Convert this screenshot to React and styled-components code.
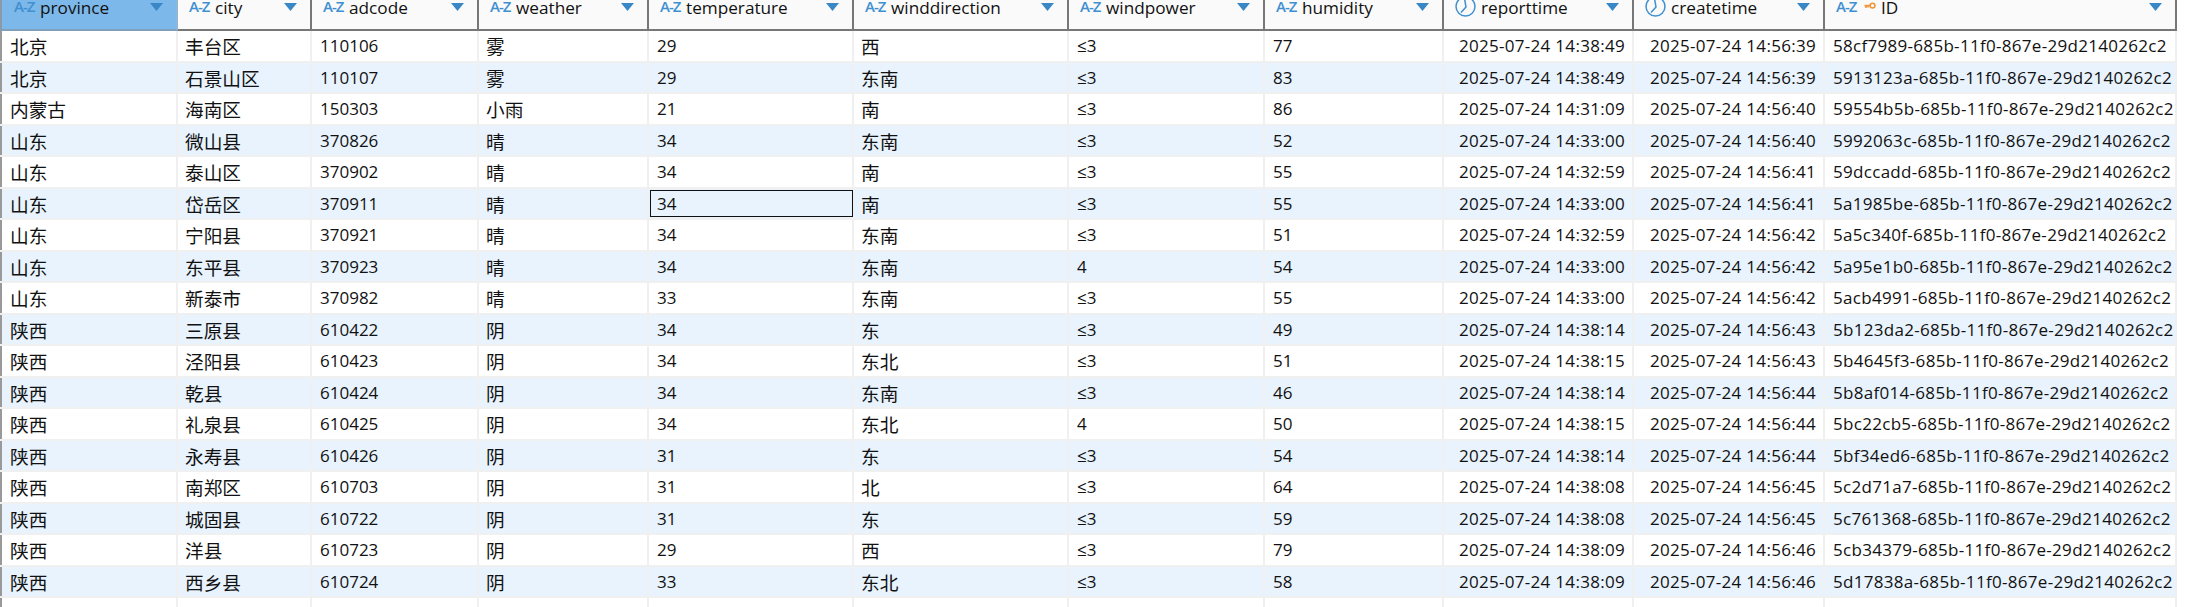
import React from "react";
import styled, { createGlobalStyle } from "styled-components";

const COLS = "178px 134px 167px 170px 205px 215px 196px 179px 190px 191px 352px";
const LATIN = '"Open Sans", "Noto Sans CJK SC", sans-serif';
const CJK = '"Noto Sans CJK SC", "Open Sans", sans-serif';

const Global = createGlobalStyle`
  html, body { margin: 0; padding: 0; background: #fff; overflow: hidden; }
  #root { width: 2187px; height: 607px; overflow: hidden; }
`;

const Grid = styled.div`
  width: 2177px;
  font-family: ${LATIN};
  color: #111;
`;

const HeadRow = styled.div`
  display: grid;
  grid-template-columns: ${COLS};
  height: 31px;
  overflow: hidden;
`;

const Head = styled.div`
  display: flex;
  align-items: flex-start;
  box-sizing: border-box;
  height: 31px;
  padding-left: ${(p) => (p.$active ? "12px" : "11px")};
  overflow: hidden;
  background: ${(p) => (p.$active ? "#7db8ea" : "#fafafa")};
  border-bottom: 2px solid ${(p) => (p.$active ? "#7f9fba" : "#777")};
  border-right: 2px solid ${(p) => (p.$active ? "#8fb6d6" : "#777")};
  border-left: ${(p) => (p.$active ? "2px solid #8a9aa8" : "0")};
`;

const AzIcon = styled.span`
  flex: none;
  width: 20px;
  font-size: 15px;
  line-height: 12px;
  font-weight: 600;
  letter-spacing: -1px;
  white-space: nowrap;
  color: #3f90d0;
`;

const HeadLabel = styled.span`
  margin-left: ${(p) => p.$gap}px;
  font-size: 17.2px;
  line-height: 15px;
  white-space: nowrap;
  padding-bottom: 5px;
`;

const Caret = styled.svg`
  flex: none;
  width: 13px;
  height: 8px;
  margin: 3px 13px 0 auto;
  fill: #3a87c6;
`;

const ClockSvg = styled.svg`
  flex: none;
  width: 21px;
  height: 21px;
  margin-top: -4px;
  fill: none;
  stroke: #3f90d0;
  stroke-width: 1.5;
`;

const KeySvg = styled.svg`
  flex: none;
  width: 12px;
  height: 8px;
  margin: 2px 0 0 8px;
  fill: none;
  stroke: #f0973a;
  stroke-width: 1.6;
`;

const Row = styled.div`
  display: grid;
  grid-template-columns: ${COLS};
  height: 31.5px;
  box-sizing: border-box;
  background: ${(p) => (p.$alt ? "#e8f3fd" : "#fff")};
  border-bottom: 2px solid #f0f0f0;
  box-shadow: inset 2px 0 0 #999;
`;

const Cell = styled.div`
  display: flex;
  align-items: center;
  justify-content: ${(p) => (p.$right ? "flex-end" : "flex-start")};
  box-sizing: border-box;
  min-width: 0;
  padding: 0 ${(p) => (p.$right ? "7px" : "0")} 0 ${(p) => (p.$right ? "0" : p.$cjk ? "7px" : "8px")};
  border-right: 2px solid #f0f0f0;
  font-family: ${(p) => (p.$cjk ? CJK : LATIN)};
  font-size: ${(p) => (p.$cjk ? "18.7px" : "17px")};
  letter-spacing: ${(p) => (p.$wide ? "0.3px" : "0")};
  white-space: nowrap;
  overflow: hidden;
  &:first-child { padding-left: 10px; }
  ${(p) => p.$focus && "outline: 1.5px solid #111; outline-offset: -2px;"}
`;

const Caretdown = () => (
  <Caret viewBox="0 0 13 8"><path d="M0 0h13L6.5 8z" /></Caret>
);

const ClockIcon = () => (
  <ClockSvg viewBox="0 0 21 21">
    <circle cx="10.5" cy="10.5" r="9.5" />
    <path d="M9.5 2.5 L11 11 L6 16.5" />
  </ClockSvg>
);

const KeyIcon = () => (
  <KeySvg viewBox="0 0 12 8">
    <circle cx="8.5" cy="3.6" r="2.4" />
    <path d="M6 3.6H0.5M2 3.6V6M4 3.6V5.6" />
  </KeySvg>
);

const columns = [
  { name: "province", cjk: true, icon: "az" },
  { name: "city", cjk: true, icon: "az" },
  { name: "adcode", icon: "az" },
  { name: "weather", cjk: true, icon: "az" },
  { name: "temperature", icon: "az" },
  { name: "winddirection", cjk: true, icon: "az" },
  { name: "windpower", icon: "az" },
  { name: "humidity", icon: "az" },
  { name: "reporttime", right: true, wide: true, icon: "clock" },
  { name: "createtime", right: true, wide: true, icon: "clock" },
  { name: "ID", wide: true, icon: "key" },
];

const S = "-685b-11f0-867e-29d2140262c2";
const D = "2025-07-24 ";
const rows = [
  ["北京", "丰台区", "110106", "雾", "29", "西", "≤3", "77", "14:38:49", "14:56:39", "58cf7989"],
  ["北京", "石景山区", "110107", "雾", "29", "东南", "≤3", "83", "14:38:49", "14:56:39", "5913123a"],
  ["内蒙古", "海南区", "150303", "小雨", "21", "南", "≤3", "86", "14:31:09", "14:56:40", "59554b5b"],
  ["山东", "微山县", "370826", "晴", "34", "东南", "≤3", "52", "14:33:00", "14:56:40", "5992063c"],
  ["山东", "泰山区", "370902", "晴", "34", "南", "≤3", "55", "14:32:59", "14:56:41", "59dccadd"],
  ["山东", "岱岳区", "370911", "晴", "34", "南", "≤3", "55", "14:33:00", "14:56:41", "5a1985be"],
  ["山东", "宁阳县", "370921", "晴", "34", "东南", "≤3", "51", "14:32:59", "14:56:42", "5a5c340f"],
  ["山东", "东平县", "370923", "晴", "34", "东南", "4", "54", "14:33:00", "14:56:42", "5a95e1b0"],
  ["山东", "新泰市", "370982", "晴", "33", "东南", "≤3", "55", "14:33:00", "14:56:42", "5acb4991"],
  ["陕西", "三原县", "610422", "阴", "34", "东", "≤3", "49", "14:38:14", "14:56:43", "5b123da2"],
  ["陕西", "泾阳县", "610423", "阴", "34", "东北", "≤3", "51", "14:38:15", "14:56:43", "5b4645f3"],
  ["陕西", "乾县", "610424", "阴", "34", "东南", "≤3", "46", "14:38:14", "14:56:44", "5b8af014"],
  ["陕西", "礼泉县", "610425", "阴", "34", "东北", "4", "50", "14:38:15", "14:56:44", "5bc22cb5"],
  ["陕西", "永寿县", "610426", "阴", "31", "东", "≤3", "54", "14:38:14", "14:56:44", "5bf34ed6"],
  ["陕西", "南郑区", "610703", "阴", "31", "北", "≤3", "64", "14:38:08", "14:56:45", "5c2d71a7"],
  ["陕西", "城固县", "610722", "阴", "31", "东", "≤3", "59", "14:38:08", "14:56:45", "5c761368"],
  ["陕西", "洋县", "610723", "阴", "29", "西", "≤3", "79", "14:38:09", "14:56:46", "5cb34379"],
  ["陕西", "西乡县", "610724", "阴", "33", "东北", "≤3", "58", "14:38:09", "14:56:46", "5d17838a"],
];

const format = (value, i) => {
  if (i === 8 || i === 9) return D + value;
  if (i === 10) return value + S;
  return value;
};

export default function App() {
  return (
    <>
      <Global />
      <Grid>
        <HeadRow>
          {columns.map((c, i) => (
            <Head key={c.name} $active={i === 0}>
              {c.icon === "clock" ? <ClockIcon /> : <AzIcon>A-Z</AzIcon>}
              {c.icon === "key" && <KeyIcon />}
              <HeadLabel $gap={c.icon === "clock" ? 5 : c.icon === "key" ? 5 : 6}>{c.name}</HeadLabel>
              <Caretdown />
            </Head>
          ))}
        </HeadRow>
        {rows.map((r, ri) => (
          <Row key={r[10]} $alt={ri % 2 === 1}>
            {r.map((v, i) => (
              <Cell
                key={i}
                $cjk={columns[i].cjk}
                $right={columns[i].right}
                $wide={columns[i].wide}
                $focus={ri === 5 && i === 4}
              >
                {format(v, i)}
              </Cell>
            ))}
          </Row>
        ))}
        <Row>
          {columns.map((c) => (
            <Cell key={c.name} />
          ))}
        </Row>
      </Grid>
    </>
  );
}
